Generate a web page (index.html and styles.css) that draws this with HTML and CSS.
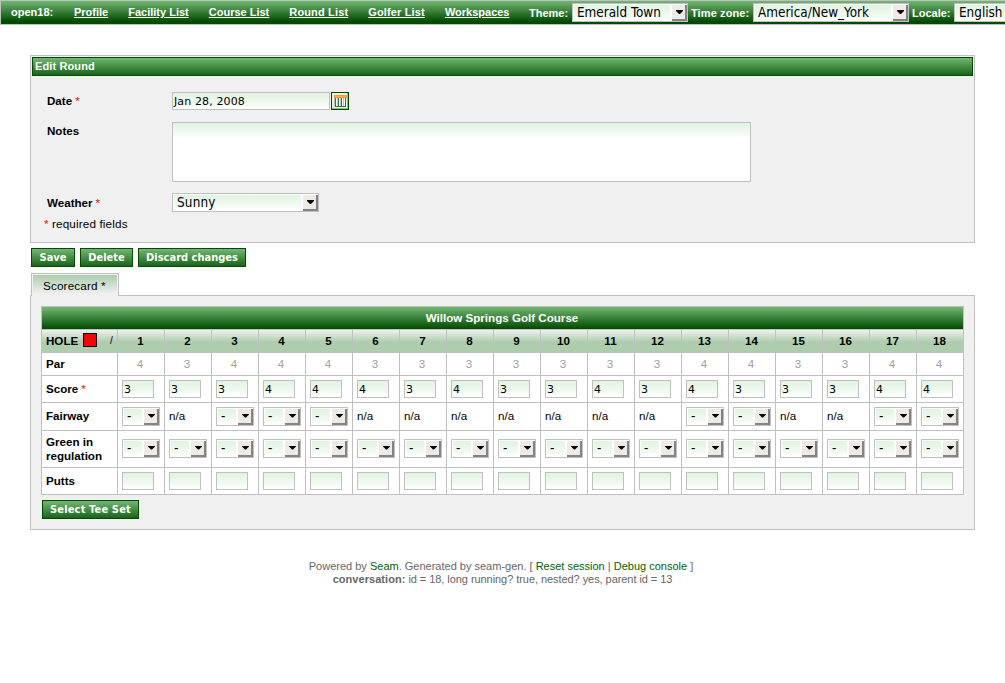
FILE: index.html
```html
<!DOCTYPE html>
<html lang="en">
<head>
<meta charset="utf-8">
<title>open18: Edit Round</title>
<link rel="stylesheet" href="styles.css">
</head>
<body>
<header class="toolbar">
  <span class="brand">open18:</span>
  <nav class="menu">
    <a href="#">Profile</a>
    <a href="#">Facility List</a>
    <a href="#">Course List</a>
    <a href="#" class="wide">Round List</a>
    <a href="#" class="wide">Golfer List</a>
    <a href="#">Workspaces</a>
  </nav>
  <div class="settings">
    <span class="lbl lbl-theme">Theme:</span>
    <span class="select theme"><span class="value">Emerald Town</span><i class="arrow"></i></span>
    <span class="lbl lbl-zone">Time zone:</span>
    <span class="select zone"><span class="value">America/New_York</span><i class="arrow"></i></span>
    <span class="lbl lbl-locale">Locale:</span>
    <span class="select locale"><span class="value">English</span></span>
  </div>
</header>

<main class="content">
  <section class="panel">
    <h1 class="panel-title">Edit Round</h1>
    <div class="form">
      <div class="field date-field">
        <label>Date<em>*</em></label>
        <span class="input date">Jan 28, 2008</span>
        <svg class="calendar" width="18" height="18" viewBox="0 0 18 18" shape-rendering="crispEdges">
          <rect width="18" height="18" rx="1" fill="#004b00"/>
          <rect x="1" y="1" width="16" height="16" fill="#8fbd8f"/>
          <rect x="1" y="1" width="15" height="15" fill="#e6f3e6"/>
          <rect x="3" y="3" width="13" height="3" fill="#ff9a22"/>
          <rect x="4" y="4" width="11" height="1" fill="#ffad4a"/>
          <rect x="3" y="6" width="12" height="9" fill="#a9cbb5"/>
          <path d="M5.5 6v8M8.5 6v8M11.5 6v8M13.5 6v8" stroke="#fff" fill="none"/>
          <path d="M4.5 6v8M7.5 6v8M10.5 6v8M14.5 6v9M4 14.5h11" stroke="#39744b" fill="none"/>
        </svg>
      </div>
      <div class="field notes-field">
        <label>Notes</label>
        <span class="input notes"></span>
      </div>
      <div class="field weather-field">
        <label>Weather<em>*</em></label>
        <span class="select weather"><span class="value">Sunny</span><i class="arrow"></i></span>
      </div>
      <p class="required"><em>*</em> required fields</p>
    </div>
  </section>

  <div class="actions">
    <button class="btn save">Save</button>
    <button class="btn delete">Delete</button>
    <button class="btn discard">Discard changes</button>
  </div>

  <div class="tab">Scorecard *</div>
  <section class="tab-body">
    <div class="scorecard" id="scorecard">
      <div class="course">Willow Springs Golf Course</div>
    </div>
    <button class="btn tee">Select Tee Set</button>
  </section>
</main>

<footer class="footer">
  <div class="powered">Powered by <a href="#">Seam</a>. Generated by seam-gen. [ <a href="#">Reset session</a> | <a href="#">Debug console</a> ]</div>
  <div class="conversation"><b>conversation:</b> id = 18, long running? true, nested? yes, parent id = 13</div>
</footer>
<script src="scorecard.js"></script>
</body>
</html>
```

FILE: styles.css
```css
* { box-sizing: border-box; }
body {
  margin: 0;
  overflow: hidden;
  background: #fff;
  color: #000;
  font: 11px/14px "Liberation Sans", Arial, sans-serif;
}
em { color: #f00; font-style: normal; font-weight: normal; margin-left: 3px; }

.toolbar {
  display: flex;
  height: 25px;
  padding-left: 10px;
  border: 1px solid #c0c0c0;
  border-right: 0;
  background: linear-gradient(#71b871, #004b00 90%);
  color: #fff;
  font-weight: bold;
  line-height: 23px;
  white-space: nowrap;
  overflow: hidden;
}
.brand { width: 63px; flex: none; }
.menu { display: flex; flex: none; gap: 20px; width: 455px; }
.menu a { color: #fff; }
.menu .wide { letter-spacing: .15px; }
.settings { display: flex; flex: 1; min-width: 0; padding-top: 2px; }
.lbl { flex: none; line-height: 21px; }
.lbl-theme { width: 43px; }
.lbl-zone { width: 65px; padding-left: 3px; letter-spacing: .1px; }
.lbl-locale { width: 45px; padding-left: 3px; }

.select {
  display: flex;
  height: 19px;
  border: 1px solid #c0c0c0;
  background: #fff;
  color: #000;
  padding: 1px 0 0 1px;
  font: 13.4px/16px "DejaVu Sans Condensed", "DejaVu Sans", sans-serif;
  white-space: nowrap;
}
.value {
  flex: 1;
  min-width: 0;
  height: 15px;
  margin-right: 2px;
  padding-left: 3px;
  background: linear-gradient(#e0f4e0, #f5fcf5 13px, #fff 13px);
}
.arrow {
  position: relative;
  width: 15px;
  height: 16px;
  background: #eeebe7;
  border: solid;
  border-width: 0 2px 2px 0;
  border-color: #848284;
}
.arrow::after {
  content: "";
  position: absolute;
  left: 4px;
  top: 5px;
  width: 7px;
  height: 4px;
  background: #000;
  clip-path: polygon(0 0, 100% 0, 100% 25%, 57% 100%, 43% 100%, 0 25%);
}
.theme { flex: none; width: 116px; }
.zone { flex: none; width: 156px; }
.locale { flex: 1; min-width: 0; border-right: 0; overflow: hidden; }
.locale .value { margin-right: 0; }
.weather { width: 147px; letter-spacing: .2px; }

.content { width: 945px; margin: 30px 0 0 30px; }
.panel {
  height: 188px;
  padding: 1px;
  border: 1px solid #c0c0c0;
  background: #f0f0f0;
}
.panel-title {
  height: 19px;
  margin: 0;
  padding-left: 2px;
  border: 1px solid #004b00;
  background: linear-gradient(#71b871, #176617);
  color: #fff;
  font-size: 11px;
  line-height: 17px;
  letter-spacing: .12px;
}
.form { padding: 16px 0 0 15px; }
.field { display: flex; }
.field label { width: 125px; font-size: 11.6px; font-weight: bold; line-height: 18px; }
.input {
  border: 1px solid #c0c0c0;
  background: linear-gradient(#e0f4e0, #f5fcf5 13px, #fff 13px);
  font: 11px/17px "DejaVu Sans", sans-serif;
}
.date { width: 158px; height: 18px; padding-left: 1px; letter-spacing: .12px; }
.calendar { margin-left: 1px; }
.notes-field { margin-top: 12px; }
.notes { width: 579px; height: 60px; }
.weather-field { margin-top: 11px; }
.weather-field label { line-height: 20px; }
.required { margin: 4px 0 0 -3px; font-size: 11.7px; letter-spacing: .15px; }
.required em { margin: 0; letter-spacing: 0; }

.actions { display: flex; gap: 5px; margin: 5px 0 6px 1px; }
.btn {
  display: block;
  height: 19px;
  padding: 0;
  border: 1px solid #004b00;
  border-radius: 0;
  background: linear-gradient(#71b871, #176617);
  color: #fff;
  font: bold 11px/16px "DejaVu Sans Condensed", "DejaVu Sans", sans-serif;
  white-space: nowrap;
}
.save { width: 44px; }
.delete { width: 53px; }
.discard { width: 108px; }
.tee { width: 97px; margin: 5px 0 0 1px; letter-spacing: .15px; }

.tab {
  position: relative;
  width: 88px;
  height: 23px;
  margin: 0 0 -1px 1px;
  border: 1px solid #c0c0c0;
  border-bottom: 0;
  background: linear-gradient(#adcdad, #f0f0f0) 1px 1px / 84px 19px no-repeat #f0f0f0;
  padding-left: 11px;
  font-size: 11.7px;
  line-height: 23px;
  letter-spacing: .15px;
}
.tab-body {
  height: 235px;
  padding: 10px;
  border: 1px solid #c0c0c0;
  background: #f0f0f0;
}

.scorecard {
  display: grid;
  width: 923px;
  grid-template-columns: 75px repeat(18, 46px);
  grid-template-rows: 22px 22px 22px 26px 27px 36px 26px;
  gap: 1px;
  padding: 1px;
  background: #c0c0c0;
  font-size: 11.6px;
}
.course {
  grid-column: 1 / -1;
  background: linear-gradient(#71b871, #004b00);
  color: #fff;
  font-weight: bold;
  line-height: 22px;
  text-align: center;
  padding-right: 1px;
}
.cell { display: flex; align-items: center; padding-left: 4px; background: #fff; }
.row-label { font-weight: bold; }
.hole, .hole-label { background: linear-gradient(#f0f0f0, #adcdad 12px); }
.hole { font-weight: bold; }
.hole, .par { justify-content: center; padding: 0 1px 0 0; }
.par { color: #a0a0a0; padding-right: 2px; }
.fairway, .fairway-label { padding-bottom: 1px; }
.green { padding-bottom: 2px; }
.hole-text { width: 37px; }
.swatch { width: 14px; height: 14px; margin: -3px 13px 0 0; border: 1px solid #000; background: #f00; }
.hole-label small { font-size: 10px; font-weight: normal; }
.cell .input { width: 32px; height: 18px; padding-left: 1px; }
.cell .select { width: 38px; }

.footer { margin-top: 30px; text-align: center; color: #666; line-height: 13px; padding-right: 3px; }
.footer a { color: #006400; text-decoration: none; }
.powered { height: 13px; }
.conversation { padding-left: 3px; letter-spacing: -.06px; }
.conversation b { letter-spacing: .05px; }
```

FILE: scorecard.js
```js
const pars = [4, 3, 4, 4, 4, 3, 3, 3, 3, 3, 3, 3, 4, 4, 3, 3, 4, 4];
const scores = [3, 3, 3, 4, 4, 4, 3, 4, 3, 3, 4, 3, 4, 3, 3, 3, 4, 4];
const select = '<span class="select"><span class="value">-</span><i class="arrow"></i></span>';
const input = value => `<span class="input">${value}</span>`;

const rows = [
  { label: '<span class="hole-text">HOLE</span><i class="swatch"></i><small>/</small>', head: 'hole-label', kind: 'hole', cell: i => i + 1 },
  { label: 'Par', kind: 'par', cell: i => pars[i] },
  { label: '<span>Score<em>*</em></span>', kind: 'score', cell: i => input(scores[i]) },
  { label: 'Fairway', head: 'fairway-label', kind: 'fairway', cell: i => pars[i] === 4 ? select : 'n/a' },
  { label: '<span>Green in<br>regulation</span>', kind: 'green', cell: () => select },
  { label: 'Putts', kind: 'putts', cell: () => input('') }
];

document.getElementById('scorecard').insertAdjacentHTML('beforeend', rows.map(row =>
  `<div class="cell row-label ${row.head || ''}">${row.label}</div>` +
  pars.map((_, i) => `<div class="cell ${row.kind}">${row.cell(i)}</div>`).join('')
).join(''));
```
